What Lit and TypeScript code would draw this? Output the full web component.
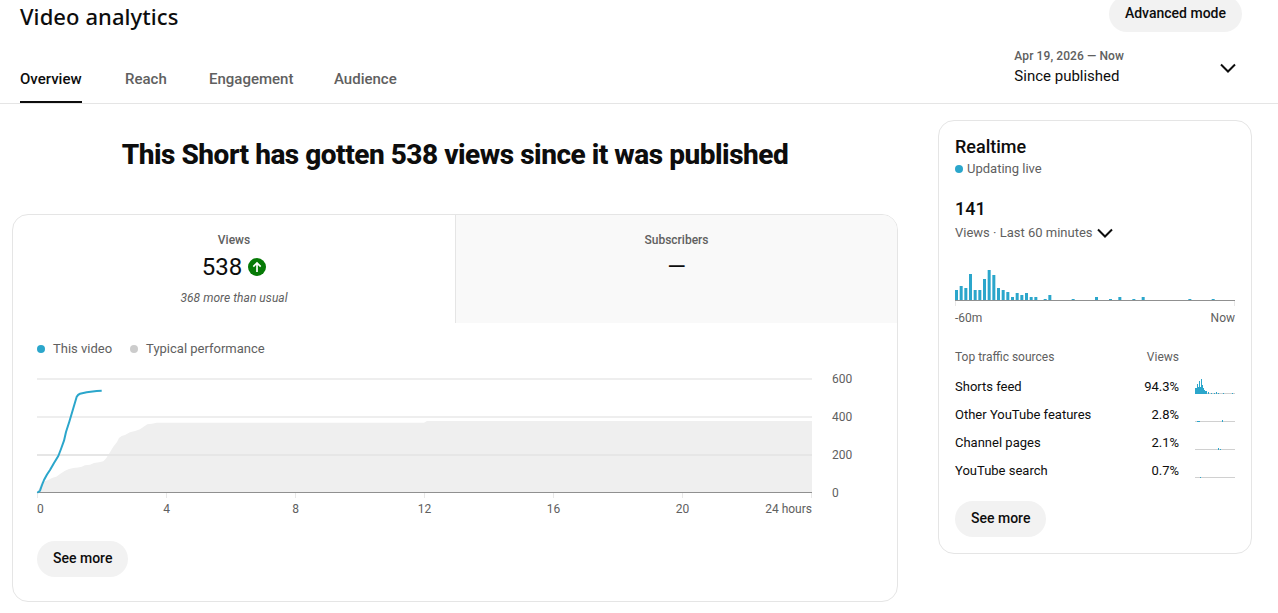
import { LitElement, html, css, svg } from "lit";
import { customElement } from "lit/decorators.js";

const blue = "M37.3 492.7 L40 490.7 L42 485 L44 480 L47 474.5 L50 470 L54 463 L58.3 456 L61 449 L64 440.7 L66 432 L69.3 421.7 L73.3 408.3 L76.7 396.7 Q78 394.5 80 393.7 L86.7 392.3 L96.7 391 L101.7 390.8";
const area = "M37.3 493 L41.7 481.7 L45 481 L48.3 480 L52 478 L56.7 476.5 L60 474 L65 470.7 L69 469 L73.3 468 L78 467.5 L81.7 466.7 L85 465.2 L90 464.7 L94 463 L99 462.3 L103.3 461.3 L106 458.5 L108.3 455 L113.3 446.7 L117 442 L119 438 L121.7 436 L125 435 L130 432.3 L135 431 L140 429.3 L144 426.5 L147.3 424.3 L152 423.8 L156.7 422.7 L424 422.7 L427 421 L812 421 L812 493 Z";

const rt: [number, number][] = [[0,10],[1,14],[2,12],[3,26],[4,10],[5,10],[6,21],[7,30],[8,25],[9,12],[10,10],[11,8],[12,3],[13,7],[14,5],[15,7],[16,3],[17,3],[19,1],[20,5],[25,1],[30,3],[33,1],[35,3],[38,1],[40,3],[50,1],[55,1]];

const sparks: { y: number; bars: [number, number, number][] }[] = [
  { y: 393, bars: [[1195,2,6],[1197,1,10],[1198,1,7],[1199,1,13],[1200,1,7],[1201,1,15],[1202,1,9],[1203,1,6],[1204,1,4],[1205,1,3],[1206,1,3],[1208,1,2],[1211,1,1],[1214,1,1],[1216,1,2],[1218,1,1],[1223,1,1],[1232,1,1]] },
  { y: 421, bars: [[1197,3,1],[1222,1,2]] },
  { y: 449, bars: [[1218,1,2],[1220,1,1]] },
  { y: 477, bars: [[1200,1,1]] },
];

@customElement("app-root")
export class AppRoot extends LitElement {
  static styles = css`
    :host { display: block; font-family: Roboto, "Liberation Sans", sans-serif; color: #0d0d0d; background: #fff; height: 613px; overflow: hidden; }
    .top { display: flex; justify-content: space-between; align-items: flex-start; height: 32px; padding: 0 36px 0 20px; }
    h1 { margin: 0; font: 500 22px/32px "Noto Sans", sans-serif; letter-spacing: 0.08px; }
    .btn { border: 0; background: #f2f2f2; color: #0d0d0d; height: 36px; border-radius: 18px; padding: 0 16px 2px; font: 500 14px/34px Roboto, sans-serif; }
    .top .btn { margin-top: -4px; }
    .nav { display: flex; justify-content: space-between; align-items: flex-end; height: 72px; border-bottom: 1px solid #e5e5e5; padding: 0 38px 0 20px; box-sizing: border-box; }
    .tabs { display: grid; grid-template-columns: 105px 84px 125px auto; }
    .tab { font: 500 15px/20px Roboto, sans-serif; color: #606060; padding-top: 2px; padding-bottom: 12px; height: 22px; justify-self: start; }
    .tab.on { color: #0d0d0d; box-shadow: inset 0 -2px 0 #0d0d0d; }
    .range { display: flex; align-items: center; gap: 92px; height: 56px; margin-bottom: 8px; }
    .range svg { margin-top: 2px; }
    .dates { font: 500 12px/16px Roboto, sans-serif; color: #606060; letter-spacing: 0.1px; }
    .since { font: 400 15px/22px Roboto, sans-serif; color: #0d0d0d; margin-top: 1px; }
    .main { display: flex; align-items: flex-start; padding-left: 12px; }
    .left { width: 886px; }
    h2 { margin: 32px 0 0; height: 78px; text-align: center; font: 800 28px/38px Roboto, sans-serif; letter-spacing: -0.48px; }
    .card { border: 1px solid #e5e5e5; border-radius: 16px; box-sizing: border-box; overflow: hidden; }
    .chart-card { height: 388px; }
    .metrics { display: grid; grid-template-columns: 442px 1fr; height: 108px; }
    .metric { text-align: center; padding-top: 16px; box-sizing: border-box; }
    .metric.off { background: #f9f9f9; border-left: 1px solid #e5e5e5; }
    .m-label { font: 500 12px/18px Roboto, sans-serif; color: #606060; }
    .m-value { display: flex; justify-content: center; align-items: center; gap: 6px; font: 400 24px/32px Roboto, sans-serif; height: 32px; margin-top: 2px; }
    .note { font: italic 400 12px/16px Roboto, sans-serif; color: #606060; margin-top: 7px; letter-spacing: 0.05px; }
    .legend { display: flex; gap: 18px; padding: 18px 24px 0; font: 400 13px/16px Roboto, sans-serif; color: #606060; }
    .li { display: flex; align-items: center; gap: 8px; }
    .dot { width: 8px; height: 8px; border-radius: 50%; }
    .dot.blue { background: #2ba6cb; }
    .dot.grey { background: #ccc; }
    .plot { display: block; }
    .plot text { font: 400 12px Roboto, sans-serif; fill: #606060; }
    .chart-card .btn { margin: 24px 0 0 24px; }
    .side { width: 314px; height: 434px; margin: 16px 0 0 40px; padding: 15px 16px 0; flex: none; }
    .rt { font: 500 18px/22px Roboto, sans-serif; }
    .live { display: flex; align-items: center; gap: 4px; font: 400 13px/20px Roboto, sans-serif; color: #606060; margin-top: 1px; }
    .count { font: 500 18px/24px Roboto, sans-serif; margin-top: 18px; }
    .sub { display: flex; align-items: center; gap: 0; height: 20px; font: 400 13px/20px Roboto, sans-serif; color: #606060; margin-top: 2px; }
    .bars { display: block; margin: 20px 0 0 -16px; }
    .bars text { font: 400 12px Roboto, sans-serif; fill: #606060; }
    .traffic { position: relative; margin-top: 14px; width: 280px; display: grid; grid-template-columns: 180px 44px; font: 400 13px/28px Roboto, sans-serif; }
    .traffic .pct { text-align: right; }
    .traffic .hd { color: #606060; font-size: 12px; line-height: 16px; padding-bottom: 8px; }
    .spark { position: absolute; left: -16px; top: 0; pointer-events: none; }
    .side .btn { margin-top: 16px; }
  `;

  render() {
    const grid = [379, 417, 455];
    const ticks = [37, 166, 295, 424, 553, 682, 811];
    const chartTop = 357;
    const sideBarsTop = 263;
    return html`
      <div class="top">
        <h1>Video analytics</h1>
        <button class="btn">Advanced mode</button>
      </div>
      <div class="nav">
        <div class="tabs">
          <div class="tab on">Overview</div>
          <div class="tab">Reach</div>
          <div class="tab">Engagement</div>
          <div class="tab">Audience</div>
        </div>
        <div class="range">
          <div>
            <div class="dates">Apr 19, 2026 — Now</div>
            <div class="since">Since published</div>
          </div>
          ${this.chevron(24)}
        </div>
      </div>
      <div class="main">
        <div class="left">
          <h2>This Short has gotten 538 views since it was published</h2>
          <div class="card chart-card">
            <div class="metrics">
              <div class="metric">
                <div class="m-label">Views</div>
                <div class="m-value">538
                  <svg width="18" height="18" viewBox="0 0 18 18"><circle cx="9" cy="9" r="9" fill="#067a06"/><path d="M9 14V5M5.3 8.6 9 4.9l3.7 3.7" fill="none" stroke="#fff" stroke-width="1.7"/></svg>
                </div>
                <div class="note">368 more than usual</div>
              </div>
              <div class="metric off">
                <div class="m-label">Subscribers</div>
                <div class="m-value">—</div>
              </div>
            </div>
            <div class="legend">
              <div class="li"><span class="dot blue"></span>This video</div>
              <div class="li"><span class="dot grey"></span>Typical performance</div>
            </div>
            <svg class="plot" width="884" height="160" viewBox="13 ${chartTop} 884 160">
              <path d=${area} fill="#efefef"/>
              ${grid.map((y) => svg`<rect x="37" y=${y - 1} width="775" height="2" fill=${y === 455 ? "#e6e6e6" : "#eeeeee"}/>`)}
              <rect x="37" y="492" width="775" height="1" fill="#909090"/>
              ${ticks.map((x) => svg`<rect x=${x} y="493" width="1" height="5" fill="#e8e8e8"/>`)}
              <path d=${blue} fill="none" stroke="#2ba6cb" stroke-width="2" stroke-linejoin="round"/>
              ${["0", "4", "8", "12", "16", "20"].map((t, i) => svg`<text x=${i === 0 ? 37 : ticks[i] + 0.5} y="513" text-anchor=${i === 0 ? "start" : "middle"}>${t}</text>`)}
              <text x="812" y="513" text-anchor="end">24 hours</text>
              ${[["600", 379], ["400", 417], ["200", 455], ["0", 493]].map(([t, y]) => svg`<text x="832" y=${Number(y) + 4}>${t}</text>`)}
            </svg>
            <button class="btn">See more</button>
          </div>
        </div>
        <div class="card side">
          <div class="rt">Realtime</div>
          <div class="live"><span class="dot blue"></span>Updating live</div>
          <div class="count">141</div>
          <div class="sub">Views · Last 60 minutes ${this.chevron(24)}</div>
          <svg class="bars" width="312" height="72" viewBox="939 ${sideBarsTop} 312 72">
            <rect x="955" y="300" width="280" height="1" fill="#909090"/>
            <rect x="955" y="301" width="1" height="5" fill="#e8e8e8"/>
            <rect x="1234" y="301" width="1" height="5" fill="#e8e8e8"/>
            ${rt.map(([i, h]) => svg`<rect x=${955 + i * 4.667} y=${300 - h} width="3" height=${h} fill="#2ba6cb"/>`)}
            <text x="955" y="322">-60m</text>
            <text x="1235" y="322" text-anchor="end">Now</text>
          </svg>
          <div class="traffic">
            <div class="hd">Top traffic sources</div><div class="hd pct">Views</div>
            <div>Shorts feed</div><div class="pct">94.3%</div>
            <div>Other YouTube features</div><div class="pct">2.8%</div>
            <div>Channel pages</div><div class="pct">2.1%</div>
            <div>YouTube search</div><div class="pct">0.7%</div>
            <svg class="spark" width="312" height="136" viewBox="939 349 312 136">
              ${sparks.map((s) => svg`
                <rect x="1195" y=${s.y} width="40" height="1" fill="#d0d0d0"/>
                ${s.bars.map(([x, w, h]) => svg`<rect x=${x} y=${s.y - h + 1} width=${w} height=${h} fill="#2ba6cb"/>`)}
              `)}
            </svg>
          </div>
          <button class="btn">See more</button>
        </div>
      </div>
    `;
  }

  chevron(size: number) {
    return html`<svg width=${size} height=${size} viewBox="0 0 24 24"><path d="M5 8.5l7 7 7-7" fill="none" stroke="#0d0d0d" stroke-width="2"/></svg>`;
  }
}
